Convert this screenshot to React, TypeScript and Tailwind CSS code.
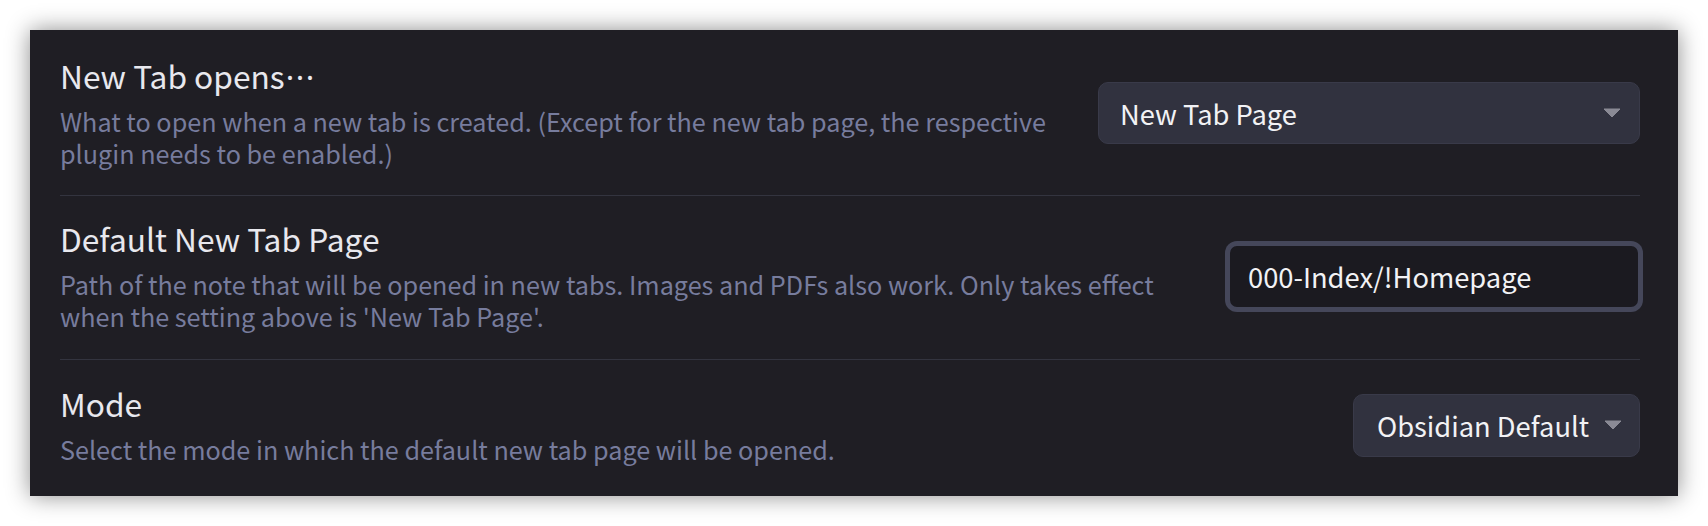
import React from "react";

const font = { fontFamily: '"Noto Sans CJK TC", "Noto Sans CJK SC", "Noto Sans", sans-serif' };

function Arrow() {
  return (
    <svg width="18" height="10" viewBox="0 0 18 10" className="shrink-0">
      <path d="M1 1 H17 L9 9 Z" fill="#8a8a95" stroke="#8a8a95" strokeWidth="1" strokeLinejoin="round" />
    </svg>
  );
}

function Info({ title, desc }: { title: React.ReactNode; desc: string }) {
  return (
    <div className="flex-1 min-w-0 pr-[30px]">
      <div className="text-[31.7px] leading-[40px] text-[#e8e8ee]">{title}</div>
      <div className="mt-[10px] text-[25.2px] leading-[32px] text-[#777c9d]">{desc}</div>
    </div>
  );
}

export default function App() {
  return (
    <div className="w-[1708px] h-[526px] bg-white pt-[30px]" style={font}>
      <div className="ml-[30px] w-[1648px] h-[466px] bg-[#1f1e24] pl-[30px] pr-[38px] pt-[3px] shadow-[0_0_22px_rgba(0,0,0,0.45)]">
        <div className="flex items-center pt-[22px] pb-[26px]">
          <Info
            title={
              <>
                New Tab opens
                <span className="font-['Noto_Sans',sans-serif] leading-none tracking-[1.5px] pl-[1px]">···</span>
              </>
            }
            desc="What to open when a new tab is created. (Except for the new tab page, the respective plugin needs to be enabled.)"
          />
          <div className="w-[542px] h-[62px] mt-[2px] shrink-0 flex items-center justify-between rounded-[10px] bg-[#31323f] border border-[#393a49] pl-[21px] pr-[18px]">
            <span className="text-[27.3px] text-[#f2f2f5]">New Tab Page</span>
            <Arrow />
          </div>
        </div>
        <div className="flex items-center border-t border-[#33343f] pt-[22px] pb-[27px]">
          <Info
            title="Default New Tab Page"
            desc="Path of the note that will be opened in new tabs. Images and PDFs also work. Only takes effect when the setting above is 'New Tab Page'."
          />
          <div className="w-[412px] h-[65px] mt-[3px] shrink-0 flex items-center rounded-[9px] bg-[#1b1a20] border-2 border-[#45475a] shadow-[0_0_0_3px_#45475a] pl-[18px]">
            <span className="text-[27.3px] text-[#f2f2f5]">000-Index/!Homepage</span>
          </div>
        </div>
        <div className="flex items-center border-t border-[#33343f] pt-[23px] pb-[28px]">
          <Info title="Mode" desc="Select the mode in which the default new tab page will be opened." />
          <div className="h-[63px] mt-[2px] shrink-0 flex items-center gap-[15px] rounded-[10px] bg-[#31323f] border border-[#393a49] pl-[23px] pr-[17px]">
            <span className="text-[27.3px] text-[#f2f2f5]">Obsidian Default</span>
            <Arrow />
          </div>
        </div>
      </div>
    </div>
  );
}
